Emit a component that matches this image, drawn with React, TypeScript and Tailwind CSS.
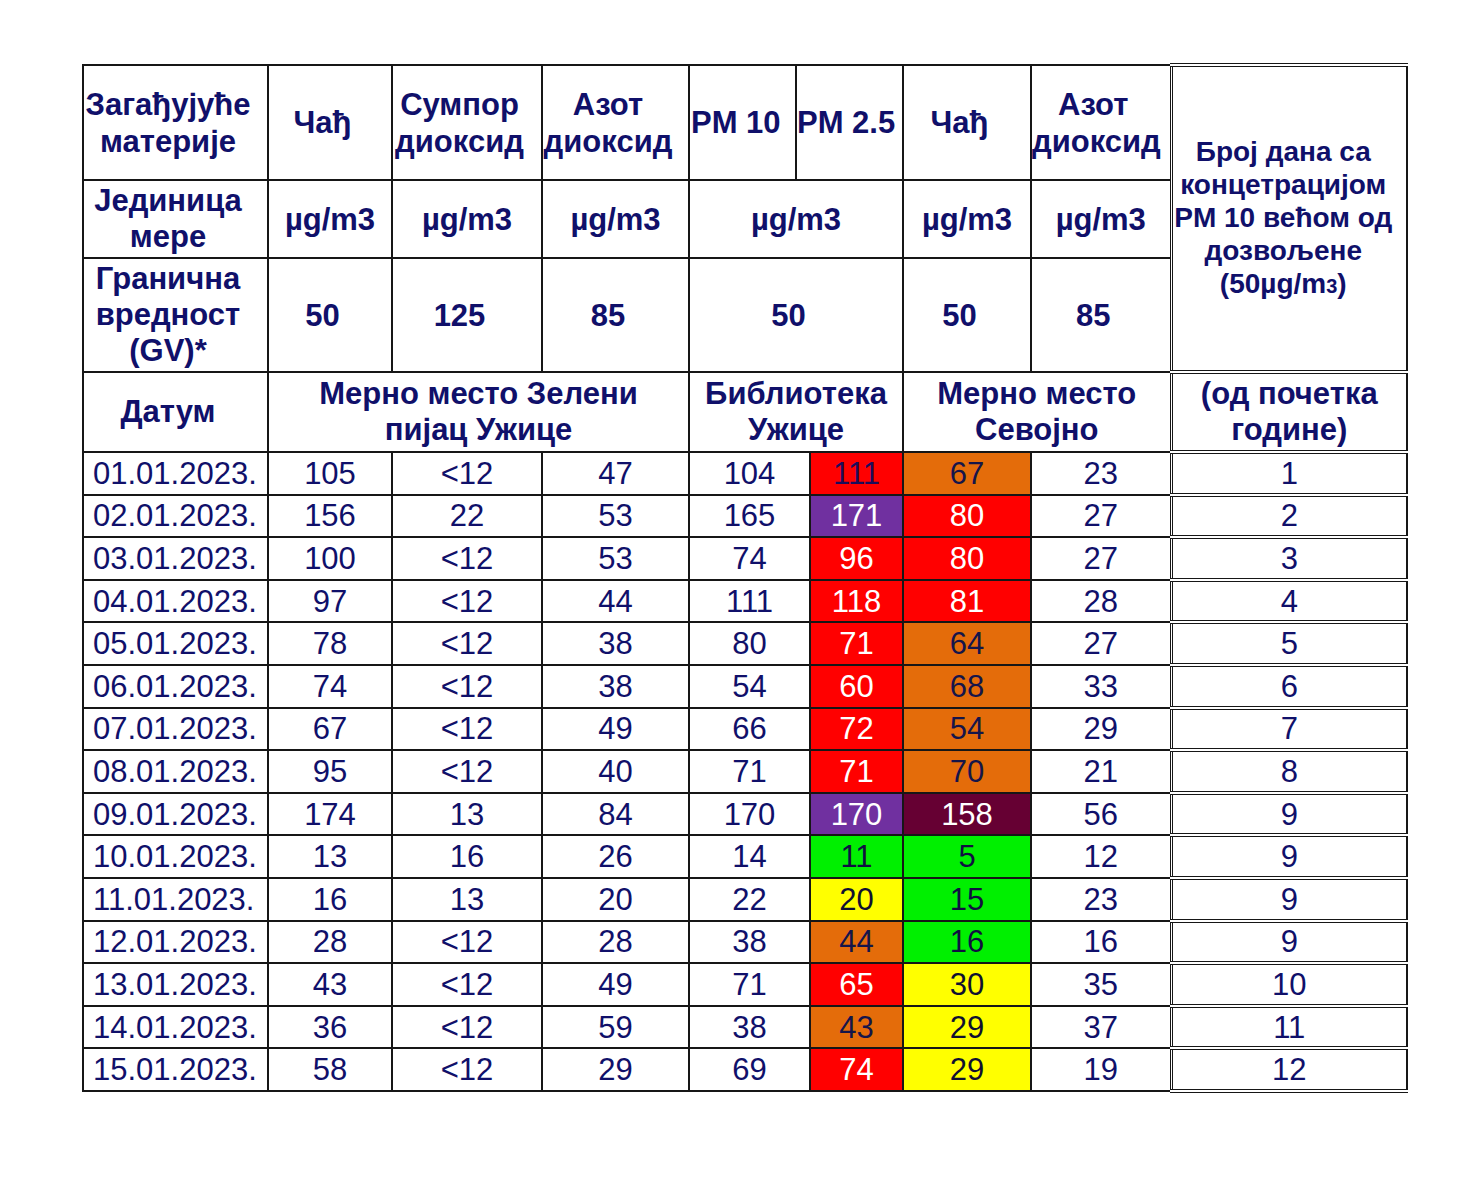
import React from "react"

type Tone = "r" | "rd" | "o" | "p" | "m" | "g" | "y"

const tones: Record<Tone, string> = {
  r: "bg-[#ff0000] text-white",
  rd: "bg-[#ff0000] text-[#1c0c5a]",
  o: "bg-[#e46c0a] text-[#15154a]",
  p: "bg-[#7030a0] text-white",
  m: "bg-[#660033] text-white",
  g: "bg-[#00f000] text-[#101040]",
  y: "bg-[#ffff00] text-[#101030]",
}

type Row = [string, string, string, string, string, string, Tone, string, Tone, string, string]

const rows: Row[] = [
  ["01.01.2023.", "105", "<12", "47", "104", "111", "rd", "67", "o", "23", "1"],
  ["02.01.2023.", "156", "22", "53", "165", "171", "p", "80", "r", "27", "2"],
  ["03.01.2023.", "100", "<12", "53", "74", "96", "r", "80", "r", "27", "3"],
  ["04.01.2023.", "97", "<12", "44", "111", "118", "r", "81", "r", "28", "4"],
  ["05.01.2023.", "78", "<12", "38", "80", "71", "r", "64", "o", "27", "5"],
  ["06.01.2023.", "74", "<12", "38", "54", "60", "r", "68", "o", "33", "6"],
  ["07.01.2023.", "67", "<12", "49", "66", "72", "r", "54", "o", "29", "7"],
  ["08.01.2023.", "95", "<12", "40", "71", "71", "r", "70", "o", "21", "8"],
  ["09.01.2023.", "174", "13", "84", "170", "170", "p", "158", "m", "56", "9"],
  ["10.01.2023.", "13", "16", "26", "14", "11", "g", "5", "g", "12", "9"],
  ["11.01.2023.", "16", "13", "20", "22", "20", "y", "15", "g", "23", "9"],
  ["12.01.2023.", "28", "<12", "28", "38", "44", "o", "16", "g", "16", "9"],
  ["13.01.2023.", "43", "<12", "49", "71", "65", "r", "30", "y", "35", "10"],
  ["14.01.2023.", "36", "<12", "59", "38", "43", "o", "29", "y", "37", "11"],
  ["15.01.2023.", "58", "<12", "29", "69", "74", "r", "29", "y", "19", "12"],
]

const cols = [185, 124, 150, 147, 107, 14, 93, 128, 140, 236]

export default function App() {
  const th = "border-2 border-[#161616] p-0 text-center align-middle"
  const thp = `${th} pr-[15px]`
  const last = "border-2 border-y-4 border-double border-l-[3px] border-[#161616] p-0 text-center align-middle"
  const td = "border-2 border-[#161616] p-0 text-center align-middle"

  return (
    <div className="min-h-[1186px] bg-white pl-[82px] pt-[63px] font-['Liberation_Sans',Arial,sans-serif] text-[#10106a]">
      <table className="w-[1324px] table-fixed border-collapse">
        <colgroup>
          {cols.map((w, i) => (
            <col key={i} style={{ width: w }} />
          ))}
        </colgroup>
        <thead className="text-[31px] font-bold leading-[37px]">
          <tr className="h-[115px]">
            <th className={`${thp} whitespace-nowrap`}>Загађујуће<br />материје</th>
            <th className={thp}>Чађ</th>
            <th className={thp}>Сумпор<br />диоксид</th>
            <th className={thp}>Азот<br />диоксид</th>
            <th className={`${th} whitespace-nowrap pl-[1px] text-left`}>PM 10</th>
            <th colSpan={2} className={`${th} whitespace-nowrap text-left`}>PM 2.5</th>
            <th className={thp}>Чађ</th>
            <th className={`${thp} whitespace-nowrap`}>Азот<br />диоксид</th>
            <th rowSpan={3} className={`${last} pr-[12px] text-[28px] leading-[33px]`}>
              Број дана са<br />концетрацијом<br />PM 10 већом од<br />дозвољене<br />(50µg/m<span className="text-[20px]">3</span>)
            </th>
          </tr>
          <tr className="h-[78px]">
            <th className={`${thp} leading-[36px]`}>Јединица<br />мере</th>
            <th className={th}>µg/m3</th>
            <th className={th}>µg/m3</th>
            <th className={th}>µg/m3</th>
            <th colSpan={3} className={th}>µg/m3</th>
            <th className={th}>µg/m3</th>
            <th className={th}>µg/m3</th>
          </tr>
          <tr className="h-[114px]">
            <th className={`${thp} leading-[36px]`}>Гранична<br />вредност<br />(GV)*</th>
            <th className={thp}>50</th>
            <th className={thp}>125</th>
            <th className={thp}>85</th>
            <th colSpan={3} className={thp}>50</th>
            <th className={thp}>50</th>
            <th className={thp}>85</th>
          </tr>
          <tr className="h-[80px]">
            <th className={`${thp} leading-[36px]`}>Датум</th>
            <th colSpan={3} className={`${th} leading-[36px]`}>Мерно место Зелени<br />пијац Ужице</th>
            <th colSpan={3} className={`${th} leading-[36px]`}>Библиотека<br />Ужице</th>
            <th colSpan={2} className={`${th} leading-[36px]`}>Мерно место<br />Севојно</th>
            <th className={`${last} leading-[36px]`}>(од почетка<br />године)</th>
          </tr>
        </thead>
        <tbody className="text-[31px] leading-none">
          {rows.map((r) => (
            <tr key={r[0]} className="h-[42.6px]">
              <td className={`${td} pl-[9px] text-left`}>{r[0]}</td>
              <td className={td}>{r[1]}</td>
              <td className={td}>{r[2]}</td>
              <td className={td}>{r[3]}</td>
              <td colSpan={2} className={td}>{r[4]}</td>
              <td className={`${td} ${tones[r[6]]}`}>{r[5]}</td>
              <td className={`${td} ${tones[r[8]]}`}>{r[7]}</td>
              <td className={td}>{r[9]}</td>
              <td className={last}>{r[10]}</td>
            </tr>
          ))}
        </tbody>
      </table>
    </div>
  )
}
